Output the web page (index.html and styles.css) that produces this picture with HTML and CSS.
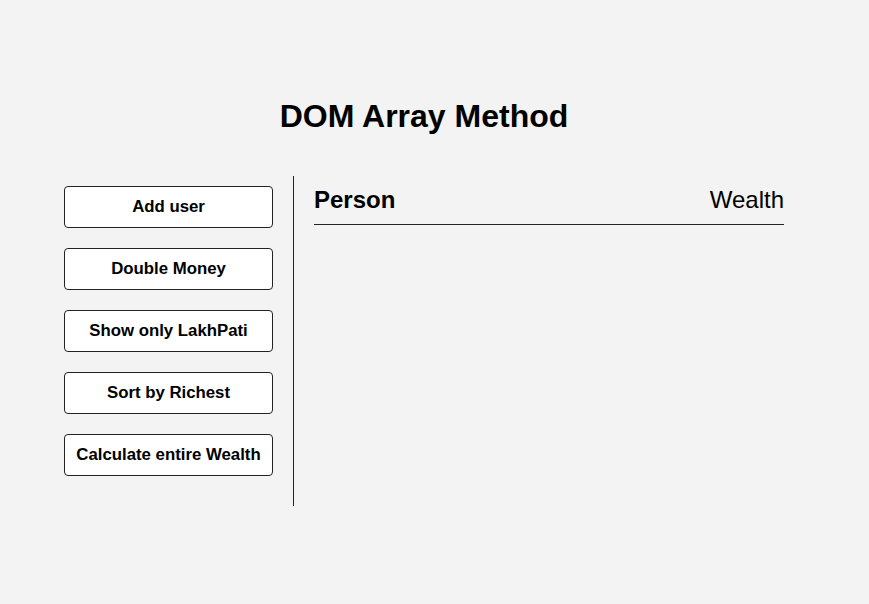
FILE: index.html
```html
<!DOCTYPE html>
<html lang="en">
<head>
<meta charset="UTF-8">
<title>DOM Array Method</title>
<link rel="stylesheet" href="styles.css">
</head>
<body>
<div class="page">
  <h1 class="title">DOM Array Method</h1>
  <div class="container">
    <aside class="sidebar">
      <button class="btn">Add user</button>
      <button class="btn">Double Money</button>
      <button class="btn">Show only LakhPati</button>
      <button class="btn">Sort by Richest</button>
      <button class="btn">Calculate entire Wealth</button>
    </aside>
    <main class="main">
      <h2 class="header"><strong>Person</strong><span class="wealth">Wealth</span></h2>
    </main>
  </div>
</div>
</body>
</html>
```
FILE: styles.css
```css
* { box-sizing: border-box; }
html, body {
  margin: 0;
  padding: 0;
  background: #f3f3f3;
  font-family: "Liberation Sans", Arial, sans-serif;
  color: #000;
}
.page {
  width: 848px;
  display: flex;
  flex-direction: column;
  align-items: center;
}
.title {
  font-size: 32px;
  line-height: 37px;
  font-weight: bold;
  margin: 98px 0 41px;
}
.container {
  display: flex;
  width: 720px;
}
.sidebar {
  width: 230px;
  padding: 10px 20px 30px 0;
  border-right: 1px solid #222;
  display: flex;
  flex-direction: column;
  gap: 20px;
}
.btn {
  width: 209px;
  height: 42px;
  background: #fff;
  border: 1px solid #222;
  border-radius: 4px;
  font-family: "Liberation Sans", Arial, sans-serif;
  font-size: 16.8px;
  font-weight: bold;
  color: #000;
  padding: 0;
}
.main {
  flex: 1;
  padding-left: 20px;
}
.header {
  margin: 0;
  padding: 10px 0 10px;
  border-bottom: 1px solid #222;
  display: flex;
  justify-content: space-between;
  font-size: 24px;
  line-height: 28px;
}
.wealth { font-weight: normal; }
```
